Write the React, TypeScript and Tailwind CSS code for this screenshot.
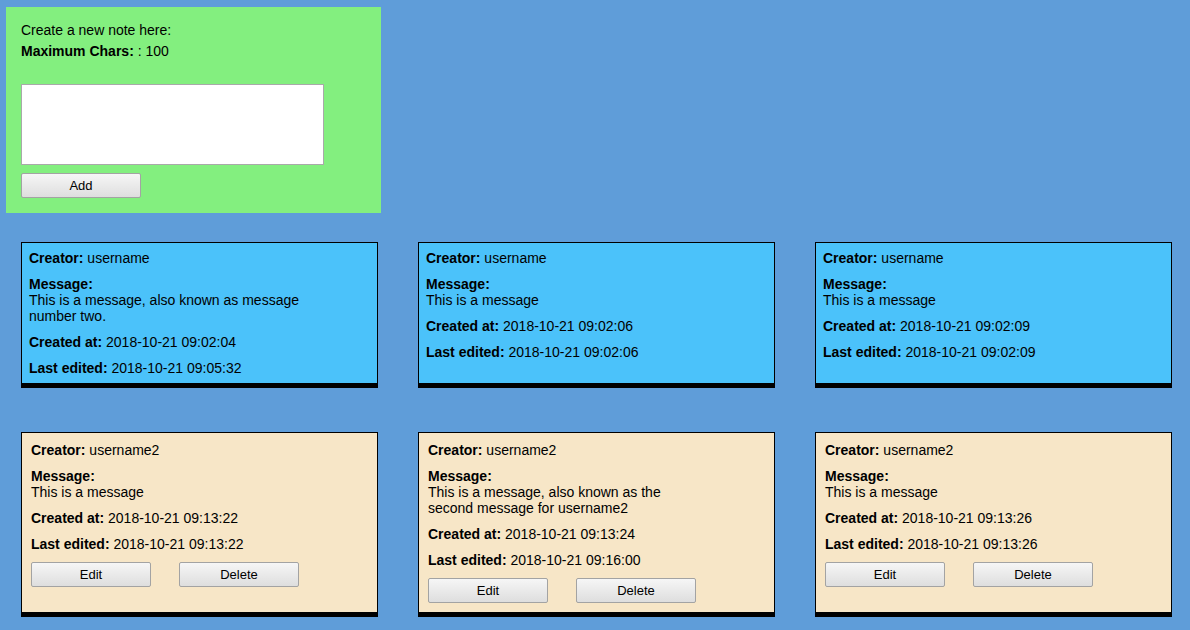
import React from 'react';

type Note = {
  creator: string;
  message: string;
  created: string;
  edited: string;
  own?: boolean;
};

const notes: Note[] = [
  { creator: 'username', message: 'This is a message, also known as message number two.', created: '2018-10-21 09:02:04', edited: '2018-10-21 09:05:32' },
  { creator: 'username', message: 'This is a message', created: '2018-10-21 09:02:06', edited: '2018-10-21 09:02:06' },
  { creator: 'username', message: 'This is a message', created: '2018-10-21 09:02:09', edited: '2018-10-21 09:02:09' },
  { creator: 'username2', message: 'This is a message', created: '2018-10-21 09:13:22', edited: '2018-10-21 09:13:22', own: true },
  { creator: 'username2', message: 'This is a message, also known as the second message for username2', created: '2018-10-21 09:13:24', edited: '2018-10-21 09:16:00', own: true },
  { creator: 'username2', message: 'This is a message', created: '2018-10-21 09:13:26', edited: '2018-10-21 09:13:26', own: true },
];

const btn =
  'w-[120px] h-[25px] border border-[#a3a3a3] rounded-[2px] bg-gradient-to-b from-[#f6f6f6] to-[#dedede] text-[13px] text-black leading-none';

const NoteCard = ({ note }: { note: Note }) => (
  <div
    className={`border border-black border-b-[5px] text-[14px] leading-[16px] ${
      note.own ? 'bg-[#f7e6c7] p-[9px]' : 'bg-[#4bc2fa] p-[7px]'
    }`}
  >
    <p className="mb-[10px]">
      <b>Creator:</b> {note.creator}
    </p>
    <p className="mb-[10px] max-w-[278px]">
      <b>Message:</b>
      <br />
      {note.message}
    </p>
    <p className="mb-[10px]">
      <b>Created at:</b> {note.created}
    </p>
    <p>
      <b>Last edited:</b> {note.edited}
    </p>
    {note.own && (
      <div className="flex gap-[28px] mt-[10px]">
        <button className={btn}>Edit</button>
        <button className={btn}>Delete</button>
      </div>
    )}
  </div>
);

export default function App() {
  return (
    <div
      className="min-h-screen w-full bg-[#5f9dd9] pt-[7px] px-[6px] text-black"
      style={{ fontFamily: '"Liberation Sans", Arial, sans-serif' }}
    >
      {/* New note form */}
      <div className="w-[375px] h-[206px] bg-[#83ef7f] pt-[15px] px-[15px] text-[14px] leading-[16px]">
        <p className="mb-[5px]">Create a new note here:</p>
        <p>
          <b>Maximum Chars:</b> : 100
        </p>
        <textarea className="block mt-[25px] w-[303px] h-[81px] bg-white border border-[#a9a9a9] resize-none outline-none" />
        <button className={`${btn} mt-[8px]`}>Add</button>
      </div>

      {/* Notes */}
      <div className="grid grid-cols-[357px_357px_357px] gap-x-[40px] gap-y-[44px] mt-[29px] ml-[15px]">
        {notes.map((n, i) => (
          <NoteCard key={i} note={n} />
        ))}
      </div>
    </div>
  );
}
